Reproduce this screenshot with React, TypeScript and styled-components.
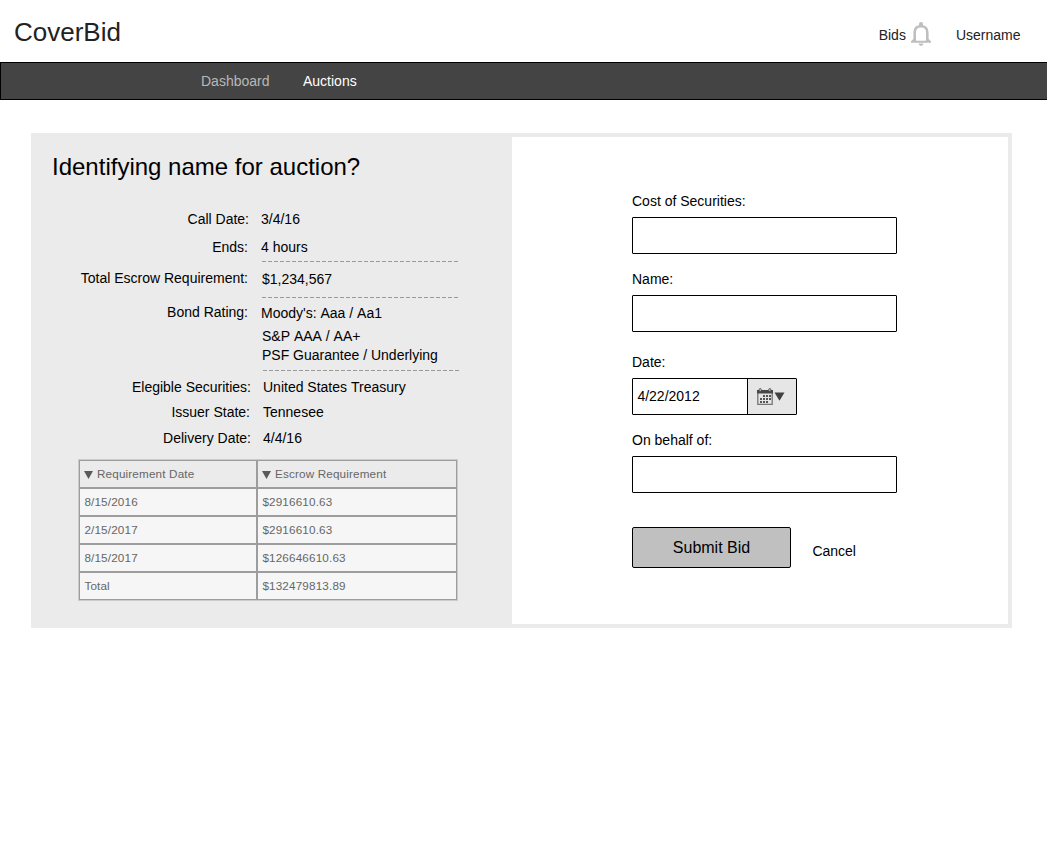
import React from "react";
import styled, { createGlobalStyle } from "styled-components";

const GlobalStyle = createGlobalStyle`
  *, *::before, *::after { box-sizing: border-box; }
  body {
    margin: 0;
    background: #fff;
    color: #000;
    font: 14px/16px "Liberation Sans", Arial, sans-serif;
    overflow-x: hidden;
  }
`;

const Page = styled.div`
  min-height: 851px;
  overflow: hidden;
`;

const Header = styled.header`
  display: flex;
  align-items: flex-start;
  height: 62px;
  padding: 17px 26.5px 0 14px;
  color: #222;
`;

const Brand = styled.div`
  font-size: 26px;
  line-height: 30px;
`;

const HeaderLinks = styled.div`
  display: flex;
  margin-left: auto;
  padding-top: 5px;
`;

const BidsLink = styled.div`
  display: flex;
  gap: 5px;
  margin-right: 25px;
`;

const HeaderText = styled.span`
  padding-top: 5px;
`;

const Nav = styled.nav`
  display: flex;
  gap: 33.5px;
  width: 1048px;
  height: 38px;
  padding: 10px 0 0 200px;
  background: #444;
  border: 1px solid #000;
`;

const NavItem = styled.span<{ $active?: boolean }>`
  color: ${(p) => (p.$active ? "#fff" : "#b8b8b8")};
`;

const Panel = styled.main`
  display: grid;
  grid-template-columns: 477px 496px;
  width: 981px;
  height: 495px;
  margin: 33px 0 0 31px;
  border: 4px solid #ebebeb;
`;

const Details = styled.section`
  padding: 16px 0 0 17px;
  background: #ebebeb;
`;

const Title = styled.h1`
  margin: 0 0 30px;
  font-size: 24px;
  line-height: 28px;
  font-weight: 400;
`;

const DetailRow = styled.div<{ $labelWidth: number; $gap: number; $top?: number }>`
  display: grid;
  grid-template-columns: ${(p) => p.$labelWidth}px auto;
  column-gap: ${(p) => p.$gap}px;
  margin-top: ${(p) => p.$top ?? 0}px;
  white-space: nowrap;
`;

const DetailLabel = styled.div`
  text-align: right;
`;

const DetailValue = styled.div<{ $drop?: number }>`
  padding-top: ${(p) => p.$drop ?? 0}px;
`;

const RatingLine = styled.div<{ $top?: number }>`
  margin: ${(p) => p.$top ?? 0}px 0 0 1px;
`;

const Divider = styled.div<{ $top: number; $shift?: number }>`
  width: 196px;
  height: 1px;
  margin: ${(p) => p.$top}px 0 0 ${(p) => 210 + (p.$shift ?? 0)}px;
  background: repeating-linear-gradient(to right, #999 0 4px, #ebebeb 4px 6px);
`;

const EscrowTable = styled.div`
  width: 380px;
  margin: 13px 0 0 26px;
  border: 1px solid #cbcbcb;
  color: #666;
  font-size: 11.7px;
  letter-spacing: 0.16px;
  line-height: 14px;
`;

const TableRow = styled.div<{ $head?: boolean }>`
  display: grid;
  grid-template-columns: 178px 200px;
  height: 28px;
  background: ${(p) => (p.$head ? "#ebebeb" : "#f6f6f6")};
`;

const Cell = styled.div`
  display: flex;
  align-items: center;
  gap: 3.6px;
  padding: 0 4px 1px 4.4px;
  border: 1px solid #9d9d9d;
  white-space: nowrap;
`;

const BidForm = styled.form`
  padding: 56px 0 0 120px;
  background: #fff;
`;

const Field = styled.div<{ $gap: number }>`
  display: flex;
  flex-direction: column;
  gap: 8px;
  margin-bottom: ${(p) => p.$gap}px;
`;

const FieldLabel = styled.label``;

const TextInput = styled.input`
  width: 265px;
  height: 37px;
  padding: 0 5px;
  border: 1px solid #000;
  border-radius: 1px;
  background: #fff;
  font: inherit;
  outline: none;
`;

const DateControl = styled.div`
  display: flex;
  width: 165px;
  height: 37px;
  border: 1px solid #000;
  border-radius: 1px;
`;

const DateText = styled.div`
  width: 114px;
  padding: 9px 0 0 4.4px;
`;

const CalendarButton = styled.div`
  display: flex;
  flex: 1;
  padding: 9px 0 0 9px;
  border-left: 1px solid #000;
  background: #e6e6e6;
`;

const Actions = styled.div`
  display: flex;
  gap: 21.4px;
`;

const SubmitButton = styled.button`
  width: 159px;
  height: 41px;
  padding: 0;
  border: 1px solid #000;
  border-radius: 2px;
  background: #c0c0c0;
  color: #000;
  font: 16px/18px "Liberation Sans", Arial, sans-serif;
`;

const Cancel = styled.span`
  padding-top: 16px;
`;

const BellIcon = () => (
  <svg width="20" height="24" viewBox="0 0 20 24">
    <path d="M3.7 18.5V10.5Q3.7 4.2 10 4.2T16.3 10.5V18.5" fill="none" stroke="#bfbfbf" strokeWidth="2.6" />
    <path d="M8 4V2Q8 0 10 0T12 2V4Z" fill="#bfbfbf" />
    <path d="M0 20.8V19.2L2.4 17H5L5.2 18.8H14.8L15 17H17.6L20 19.2V20.8Z" fill="#bfbfbf" />
    <path d="M7.5 21.6H12.5Q12 24 10 24T7.5 21.6Z" fill="#bfbfbf" />
  </svg>
);

const CalendarIcon = () => (
  <svg width="29" height="18" viewBox="0 0 29 18">
    <path d="M.8 3V16.3H15.2V3" fill="none" stroke="#777" strokeWidth="1.3" />
    <path d="M0 2H16V5.5H0Z" fill="#484848" />
    <rect x="2.2" y=".6" width="2" height="3" rx="1" fill="#ddd" stroke="#484848" />
    <rect x="11.8" y=".6" width="2" height="3" rx="1" fill="#ddd" stroke="#484848" />
    <path
      d="M6 7h2v2H6zm3 0h2v2H9zm3 0h2v2h-2zM3 10h2v2H3zm3 0h2v2H6zm3 0h2v2H9zm3 0h2v2h-2zM3 13h2v2H3zm3 0h2v2H6zm3 0h2v2H9z"
      fill="#555"
    />
    <path d="M17.5 4.5H27.5L22.5 12.7Z" fill="#404040" />
  </svg>
);

const SortIcon = () => (
  <svg width="9" height="10" viewBox="0 0 9 10">
    <path d="M0 2H9L4.5 10Z" fill="#5a5a5a" />
  </svg>
);

const escrowRows = [
  ["8/15/2016", "$2916610.63"],
  ["2/15/2017", "$2916610.63"],
  ["8/15/2017", "$126646610.63"],
  ["Total", "$132479813.89"],
];

export default function App() {
  return (
    <Page>
      <GlobalStyle />
      <Header>
        <Brand>CoverBid</Brand>
        <HeaderLinks>
          <BidsLink>
            <HeaderText>Bids</HeaderText>
            <BellIcon />
          </BidsLink>
          <HeaderText>Username</HeaderText>
        </HeaderLinks>
      </Header>
      <Nav>
        <NavItem>Dashboard</NavItem>
        <NavItem $active>Auctions</NavItem>
      </Nav>
      <Panel>
        <Details>
          <Title>Identifying name for auction?</Title>
          <DetailRow $labelWidth={197} $gap={12}>
            <DetailLabel>Call Date:</DetailLabel>
            <DetailValue>3/4/16</DetailValue>
          </DetailRow>
          <DetailRow $labelWidth={196} $gap={13} $top={12}>
            <DetailLabel>Ends:</DetailLabel>
            <DetailValue>4 hours</DetailValue>
          </DetailRow>
          <Divider $top={6} />
          <DetailRow $labelWidth={196} $gap={14} $top={8}>
            <DetailLabel>Total Escrow Requirement:</DetailLabel>
            <DetailValue $drop={1}>$1,234,567</DetailValue>
          </DetailRow>
          <Divider $top={10} />
          <DetailRow $labelWidth={196} $gap={13} $top={6}>
            <DetailLabel>Bond Rating:</DetailLabel>
            <DetailValue $drop={1}>
              Moody's:&nbsp;Aaa&nbsp;/&nbsp;Aa1
              <RatingLine $top={7}>S&amp;P&nbsp;AAA&nbsp;/&nbsp;AA+</RatingLine>
              <RatingLine $top={3}>PSF Guarantee / Underlying</RatingLine>
            </DetailValue>
          </DetailRow>
          <Divider $top={7} $shift={1} />
          <DetailRow $labelWidth={199} $gap={12} $top={8}>
            <DetailLabel>Elegible Securities:</DetailLabel>
            <DetailValue>United States&nbsp;Treasury</DetailValue>
          </DetailRow>
          <DetailRow $labelWidth={198} $gap={13} $top={9}>
            <DetailLabel>Issuer State:</DetailLabel>
            <DetailValue>Tennesee</DetailValue>
          </DetailRow>
          <DetailRow $labelWidth={199} $gap={12} $top={10}>
            <DetailLabel>Delivery Date:</DetailLabel>
            <DetailValue>4/4/16</DetailValue>
          </DetailRow>
          <EscrowTable>
            <TableRow $head>
              <Cell><SortIcon />Requirement Date</Cell>
              <Cell><SortIcon />Escrow Requirement</Cell>
            </TableRow>
            {escrowRows.map(([date, amount]) => (
              <TableRow key={date}>
                <Cell>{date}</Cell>
                <Cell>{amount}</Cell>
              </TableRow>
            ))}
          </EscrowTable>
        </Details>
        <BidForm>
          <Field $gap={17}>
            <FieldLabel htmlFor="cost">Cost of Securities:</FieldLabel>
            <TextInput id="cost" />
          </Field>
          <Field $gap={22}>
            <FieldLabel htmlFor="name">Name:</FieldLabel>
            <TextInput id="name" />
          </Field>
          <Field $gap={17}>
            <FieldLabel>Date:</FieldLabel>
            <DateControl>
              <DateText>4/22/2012</DateText>
              <CalendarButton><CalendarIcon /></CalendarButton>
            </DateControl>
          </Field>
          <Field $gap={34}>
            <FieldLabel htmlFor="behalf">On behalf of:</FieldLabel>
            <TextInput id="behalf" />
          </Field>
          <Actions>
            <SubmitButton type="button">Submit Bid</SubmitButton>
            <Cancel>Cancel</Cancel>
          </Actions>
        </BidForm>
      </Panel>
    </Page>
  );
}
